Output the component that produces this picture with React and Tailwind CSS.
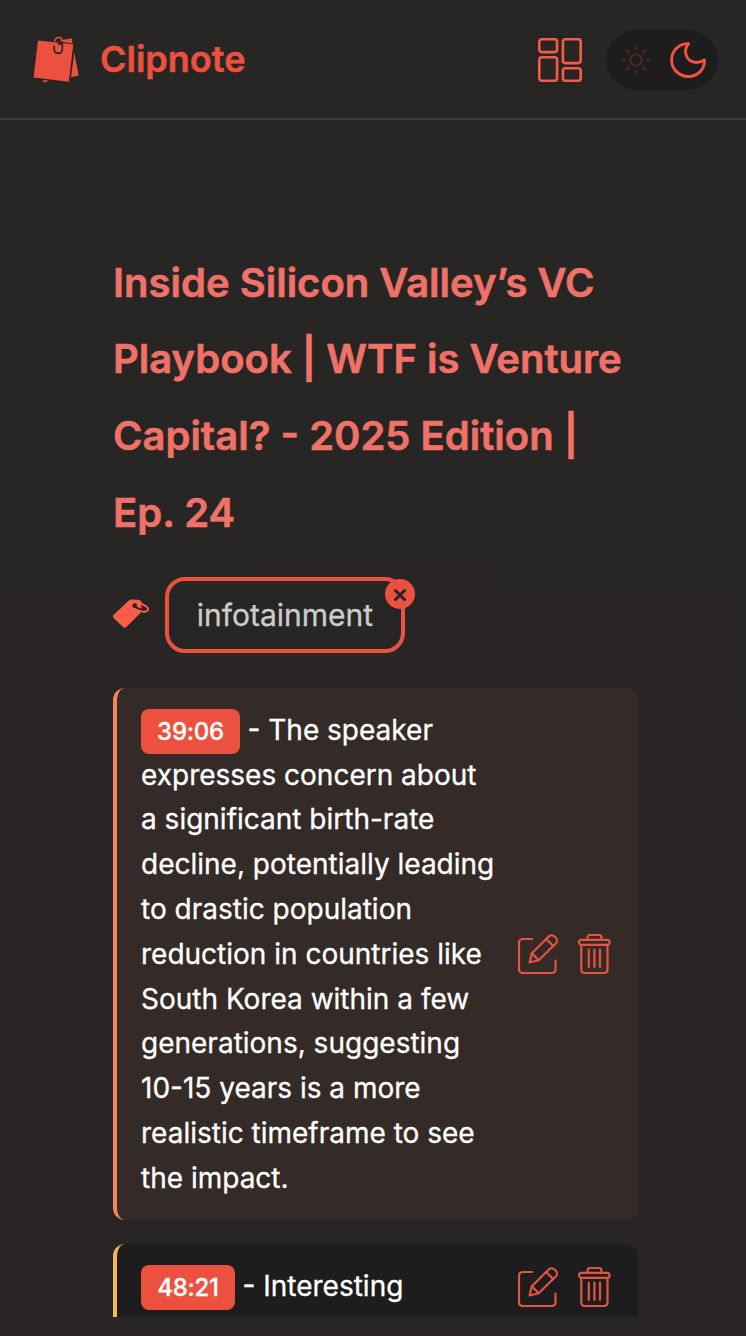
import React from "react";

function ClipLogo() {
  return (
    <svg viewBox="0 0 48 51" className="h-[51px] w-12 shrink-0">
      <path d="M28 6.5L39.7 4.2L40.4 9.2L32.5 8.3Z" fill="#ec503e" />
      <path d="M42.3 18.8L46.7 41.5L39 43.2Z" fill="#ec503e" />
      <path d="M10.7 46L17.2 46.8L12 48.6Z" fill="#ec503e" />
      <path d="M6 6.5L41.3 10.3L36.9 47.8L1.6 43.4Z" fill="#ec503e" />
      <path d="M22.8 7.4C23.5 2.2 30 2.2 30.6 7.6" stroke="#ec503e" strokeWidth="1.6" fill="none" />
      <path d="M22.2 12.3V15C22.2 20.8 30.4 20.8 30.4 15V9.9H26.4" stroke="#272524" strokeWidth="1.6" fill="none" strokeLinecap="round" />
    </svg>
  );
}

function GridIcon() {
  return (
    <svg viewBox="0 0 44 44" className="h-11 w-11" fill="none" stroke="#f75b48" strokeWidth="2.6">
      <rect x="1.3" y="1.3" width="17.8" height="12.8" rx="2.5" />
      <rect x="24.9" y="1.3" width="17.8" height="23.8" rx="2.5" />
      <rect x="1.3" y="19.2" width="17.8" height="23.5" rx="2.5" />
      <rect x="24.9" y="30.2" width="17.8" height="12.5" rx="2.5" />
    </svg>
  );
}

function SunIcon() {
  return (
    <svg viewBox="0 0 30 30" className="h-[30px] w-[30px]" fill="none" stroke="#4d2823" strokeWidth="2.3">
      <circle cx="15" cy="15" r="5.7" />
      <path d="M15 .5V5M15 25V29.5M.5 15H5M25 15H29.5M4.7 4.7L8 8M22 22L25.3 25.3M4.7 25.3L8 22M22 8L25.3 4.7" />
    </svg>
  );
}

function MoonIcon() {
  return (
    <svg viewBox="0 0 36 36" className="h-9 w-9" fill="none" stroke="#f9513f" strokeWidth="2.9" strokeLinejoin="round">
      <path d="M18.6 1.6C13 8 16 17 21.5 19.3C26 21.8 31 20 34.4 18C35 27 27.6 34.5 18.5 34.5C9 34.5 1.6 27 1.6 18C1.6 9 9 1.2 18.6 1.6Z" />
    </svg>
  );
}

function TagIcon() {
  return (
    <svg viewBox="0 0 36 30" className="h-[30px] w-9">
      <path d="M0 16.5L15.5 1.7C16.5 .8 17.5 .5 19 .5L25 .8C28 1 29 3 28.8 6L28.3 11.5C28.1 13 28 13.5 27 14.5L13.5 27.8C12.2 29 11 29 9.8 27.8L.7 19C0 18 -.3 17 0 16.5Z" fill="#ff5c49" />
      <circle cx="21.7" cy="6.7" r="2.4" fill="#292524" />
      <path d="M21.5 6.8C25 10.6 31 11.7 31.7 9.4C32 8.2 30 7 27.8 6" fill="none" stroke="#292524" strokeWidth="1.9" />
      <path d="M26 4.5C31 5.4 36 8 34.9 11C34 13.3 29.5 13.3 26 11.5" fill="none" stroke="#ff5c49" strokeWidth="1.9" />
    </svg>
  );
}

function EditIcon() {
  return (
    <svg viewBox="0 0 40 40" className="h-10 w-10" fill="none" stroke="#e45443" strokeWidth="2.2" strokeLinejoin="round" strokeLinecap="round">
      <path d="M14 5H5C2.5 5 1 6.5 1 9V35C1 37.5 2.5 39 5 39H33.5C36 39 37.5 37.5 37.5 35V26.5" />
      <path d="M11.6 28.5L13.8 19.3L31 2.2C34.5-1.2 41.6 5.4 38 9.2L20.7 26.2Z" />
      <path d="M13.8 19.3L20.7 26.2M28.2 5L35.3 12" />
    </svg>
  );
}

function TrashIcon() {
  return (
    <svg viewBox="0 0 34 40" className="h-10 w-[34px]" fill="none" stroke="#e45443" strokeWidth="2.2">
      <path d="M9.5 5.5V3.8Q9.5 1 12.3 1H20.7Q23.5 1 23.5 3.8V5.5" />
      <rect x="1" y="5.8" width="30.6" height="5" rx="2.4" />
      <path d="M3.3 11V35.2Q3.3 39 7.1 39H25.7Q29.5 39 29.5 35.2V11" />
      <path d="M10.8 15.5V33M16.4 15.5V33M22 15.5V33" strokeLinecap="round" />
    </svg>
  );
}

function NoteActions() {
  return (
    <div className="flex shrink-0 gap-5">
      <button aria-label="Edit note"><EditIcon /></button>
      <button aria-label="Delete note"><TrashIcon /></button>
    </div>
  );
}

function TimeBadge({ children, className }) {
  return (
    <span className={`mt-px mr-[7.5px] inline-flex h-[45px] items-center justify-center rounded-lg bg-[#ec503e] pt-px text-2xl font-medium leading-none tracking-[-0.25px] ${className}`}>
      {children}
    </span>
  );
}

const noteLines = [
  "expresses concern about",
  "a significant birth-rate",
  "decline, potentially leading",
  "to drastic population",
  "reduction in countries like",
  "South Korea within a few",
  "generations, suggesting",
  "10-15 years is a more",
  "realistic timeframe to see",
  "the impact.",
];

export default function App() {
  return (
    <div className="flex h-[1336px] w-[746px] flex-col overflow-hidden bg-linear-to-b from-[#272624] to-[#292525] font-['Inter',sans-serif] text-white">
      <header className="flex h-[120px] shrink-0 items-center justify-between border-b-2 border-[#3e3d3c] pr-7 pl-8">
        <div className="flex items-center gap-5">
          <ClipLogo />
          <span className="text-4xl font-semibold leading-none text-[#ec503e] [-webkit-text-stroke:0.5px_#ec503e]">Clipnote</span>
        </div>
        <div className="flex items-center gap-6 pt-[2px]">
          <GridIcon />
          <div className="flex h-[60px] w-28 items-center gap-[19px] rounded-full bg-[#1d1d1d] pl-[15px]">
            <SunIcon />
            <MoonIcon />
          </div>
        </div>
      </header>

      <main className="ml-[113px] flex h-[1197px] w-[525px] shrink-0 flex-col overflow-hidden pt-[124.5px]">
        <h1 className="whitespace-nowrap text-[40px] font-semibold leading-[76.8px] text-[#f07167] [-webkit-text-stroke:0.6px_#f07167]">
          <span className="block">Inside Silicon Valley’s VC</span>
          <span className="block">Playbook | WTF is Venture</span>
          <span className="block">Capital? - 2025 Edition |</span>
          <span className="block">Ep. 24</span>
        </h1>

        <div className="mt-[25.5px] flex shrink-0 items-center gap-4">
          <div className="pb-[2px]"><TagIcon /></div>
          <div className="relative flex h-[76px] w-60 items-center justify-center rounded-[20px] border-4 border-[#ec503e] bg-[#272624] text-[30px] text-[#cccccc] [-webkit-text-stroke:0.3px_#cccccc]">
            infotainment
            <button aria-label="Remove tag" className="absolute -top-[2px] -right-[14px] flex h-[30px] w-[30px] items-center justify-center rounded-full bg-[#ec503e]">
              <svg viewBox="0 0 12 12" className="mt-px h-3 w-3" stroke="#272624" strokeWidth="3" strokeLinecap="round">
                <path d="M1.5 1.5L10.5 10.5M10.5 1.5L1.5 10.5" />
              </svg>
            </button>
          </div>
        </div>

        <article className="mt-[35px] flex h-[532px] shrink-0 items-center justify-between rounded-xl border-l-4 border-[#f4845f] bg-[#342a28] pr-[26px] pl-6">
          <p className="whitespace-nowrap text-[28px] leading-[44.8px] [-webkit-text-stroke:0.3px_white]">
            <span className="flex h-[44.8px] items-start"><TimeBadge className="w-[99px]">39:06</TimeBadge>- The speaker</span>
            {noteLines.map((line) => <span key={line} className="block">{line}</span>)}
          </p>
          <NoteActions />
        </article>

        <article className="mt-6 flex h-[200px] shrink-0 items-start justify-between rounded-xl border-l-4 border-[#f7b658] bg-[#1d1d1d] pt-5 pr-[26px] pl-6">
          <p className="flex items-start whitespace-nowrap text-[28px] leading-[44.8px] [-webkit-text-stroke:0.3px_white]"><TimeBadge className="w-[94px]">48:21</TimeBadge>- Interesting</p>
          <div className="pt-[3px]"><NoteActions /></div>
        </article>
      </main>
    </div>
  );
}
